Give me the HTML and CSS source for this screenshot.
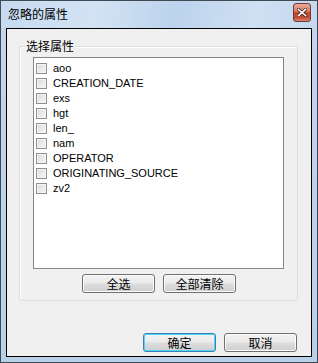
FILE: index.html
```html
<!DOCTYPE html>
<html>
<head>
<meta charset="utf-8">
<link rel="stylesheet" href="styles.css">
</head>
<body>
<div class="window">
  <div class="titlebar">
    <span class="title">忽略的属性</span>
    <span class="close"><svg width="10" height="9" viewBox="0 0 10 9"><path d="M1.5 1.5 L8.5 7.5 M8.5 1.5 L1.5 7.5" stroke="#4a2a26" stroke-width="3.2" stroke-linecap="square"/><path d="M1.5 1.5 L8.5 7.5 M8.5 1.5 L1.5 7.5" stroke="#ffffff" stroke-width="1.6" stroke-linecap="square"/></svg></span>
  </div>
  <div class="client">
    <div class="group">
      <span class="legend">选择属性</span>
      <div class="listbox">
        <div class="item"><span class="cb"></span><span class="lbl">aoo</span></div>
        <div class="item"><span class="cb"></span><span class="lbl">CREATION_DATE</span></div>
        <div class="item"><span class="cb"></span><span class="lbl">exs</span></div>
        <div class="item"><span class="cb"></span><span class="lbl">hgt</span></div>
        <div class="item"><span class="cb"></span><span class="lbl">len_</span></div>
        <div class="item"><span class="cb"></span><span class="lbl">nam</span></div>
        <div class="item"><span class="cb"></span><span class="lbl">OPERATOR</span></div>
        <div class="item"><span class="cb"></span><span class="lbl">ORIGINATING_SOURCE</span></div>
        <div class="item"><span class="cb"></span><span class="lbl">zv2</span></div>
      </div>
      <div class="group-buttons">
        <button class="btn">全选</button>
        <button class="btn">全部清除</button>
      </div>
    </div>
    <div class="dialog-buttons">
      <button class="btn default">确定</button>
      <button class="btn">取消</button>
    </div>
  </div>
</div>
</body>
</html>
```
FILE: styles.css
```css
html, body {
  margin: 0;
  padding: 0;
  background: #ffffff;
}
body {
  font-family: "Liberation Sans", "Noto Sans CJK SC", sans-serif;
  font-size: 11px;
  color: #000;
}
.window {
  width: 318px;
  height: 363px;
  box-sizing: border-box;
  border: 1px solid #3f4a55;
  background: linear-gradient(to bottom, #c2d6ec 0%, #b9d0e9 100%);
  padding: 0 5px 5px 5px;
  display: flex;
  flex-direction: column;
}
.titlebar {
  height: 27px;
  display: flex;
  align-items: center;
  justify-content: space-between;
  margin: 0 -5px;
  padding: 0 6px 0 7px;
  background: linear-gradient(100deg, #c6daf0 0%, #d3e3f4 30%, #bcd3ec 55%, #cfe0f3 80%, #c4d8ee 100%);
}
.title {
  font-family: "Noto Sans CJK SC", sans-serif;
  font-size: 12px;
  line-height: 14px;
  margin-top: -1px;
  color: #000;
}
.close {
  width: 16px;
  height: 17px;
  margin-top: -4px;
  border: 1px solid #6e3a33;
  border-radius: 3px;
  background: linear-gradient(to bottom, #e9a899 0%, #dd7a66 45%, #c8452e 50%, #c64b33 80%, #da8a6c 100%);
  display: flex;
  align-items: center;
  justify-content: center;
}
.client {
  flex: 1;
  border: 1px solid #000;
  background: #f0f0f0;
  display: flex;
  flex-direction: column;
}
.group {
  position: relative;
  margin: 17px 13px 0 12px;
  height: 255px;
  box-sizing: border-box;
  border: 1px solid #d5dfe5;
  border-radius: 3px;
  box-shadow: inset 1px 1px 0 #ffffff;
  padding: 10px 13px 0 13px;
}
.legend {
  position: absolute;
  left: 5px;
  top: -9px;
  padding: 0 2px 0 1px;
  background: #f0f0f0;
  font-family: "Noto Sans CJK SC", sans-serif;
  font-size: 12px;
  line-height: 16px;
}
.listbox {
  height: 212px;
  box-sizing: border-box;
  border: 1px solid #828790;
  background: #ffffff;
  padding-top: 3px;
}
.item {
  height: 15px;
  display: flex;
  align-items: center;
  padding-left: 2px;
}
.cb {
  width: 11px;
  height: 11px;
  border: 1px solid #8e8f8f;
  box-sizing: border-box;
  background: linear-gradient(135deg, #dadada 0%, #ececec 60%, #f6f6f6 100%);
  box-shadow: inset 0 0 0 1px #f4f4f4;
  margin-right: 6px;
}
.lbl {
  line-height: 13px;
  white-space: nowrap;
}
.group-buttons {
  display: flex;
  gap: 8px;
  margin-top: 5px;
  padding-left: 49px;
}
.btn {
  width: 73px;
  height: 19px;
  box-sizing: border-box;
  border: 1px solid #707070;
  border-radius: 3px;
  background: linear-gradient(to bottom, #f2f2f2 0%, #ebebeb 48%, #dddddd 52%, #cfcfcf 100%);
  box-shadow: inset 0 0 0 1px #fbfbfb;
  font-family: "Noto Sans CJK SC", sans-serif;
  font-size: 12px;
  line-height: 15px;
  padding: 0;
  color: #000;
}
.dialog-buttons {
  display: flex;
  justify-content: flex-end;
  gap: 8px;
  margin-top: 32px;
  padding-right: 14px;
}
.btn.default {
  border-color: #3c7fb1;
  box-shadow: inset 0 0 0 1px #48d6fb;
}
```
